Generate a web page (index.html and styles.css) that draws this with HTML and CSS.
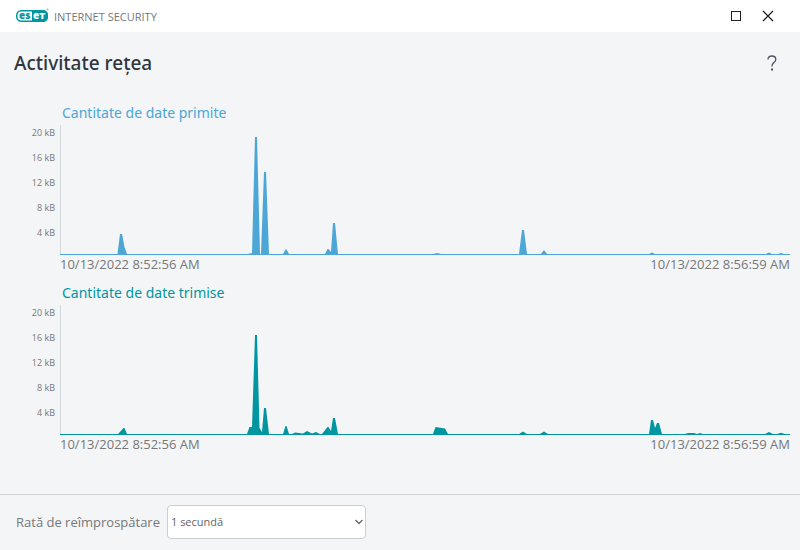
FILE: index.html
```html
<!DOCTYPE html>
<html lang="ro">
<head>
    <meta charset="UTF-8">
    <meta name="viewport" content="width=device-width, initial-scale=1.0">
    <title>Activitate reţea</title>
    <link rel="stylesheet" href="styles.css">
</head>
<body>

<header class="titlebar">
    <svg class="logo" width="33" height="16" viewBox="0 0 33 16" role="img" aria-label="ESET">
        <rect x="0.75" y="2.75" width="30.500" height="10.500" rx="4.500" fill="#fff" stroke="#0096a1" stroke-width="1.500"/>
        <path d="M16 2h11a5 5 0 0 1 5 5v2a5 5 0 0 1-5 5H16z" fill="#0096a1"/>
        <circle cx="31.5" cy="1.5" r="1" fill="#7cc8cd"/>
        <text class="logo-text" x="3" y="11" fill="#0096a1">es</text>
        <text class="logo-text" x="17" y="11" fill="#fff">eт</text>
    </svg>
    <span class="product">INTERNET SECURITY</span>
    <button type="button" class="window-button" aria-label="Maximizare">
        <svg width="12" height="12" viewBox="0 0 12 12"><rect x="1.5" y="1.5" width="9" height="9" fill="none" stroke="#222"/></svg>
    </button>
    <button type="button" class="window-button" aria-label="Închidere">
        <svg width="12" height="12" viewBox="0 0 12 12"><path d="M1 1l10 10M11 1L1 11" fill="none" stroke="#222" stroke-width="1.3"/></svg>
    </button>
</header>

<main class="content">
    <div class="heading">
        <h1>Activitate reţea</h1>
        <button type="button" class="help-button" aria-label="Ajutor">
            <svg width="10" height="16" viewBox="0 0 10 16">
                <path d="M1 4.500C1 2 2.600 1 4.800 1S8.800 2.300 8.800 4.500C8.800 7.500 5 7.500 5 10.800V11.500" fill="none" stroke="#4c5560" stroke-width="1.300"/>
                <rect x="4" y="13.500" width="2" height="2" fill="#4c5560"/>
            </svg>
        </button>
    </div>

    <section class="chart received">
        <h2>Cantitate de date primite</h2>
        <div class="scale">
            <span>20 kB</span>
            <span>16 kB</span>
            <span>12 kB</span>
            <span>8 kB</span>
            <span>4 kB</span>
        </div>
        <svg class="plot" viewBox="60 0 730 130" preserveAspectRatio="none">
            <path d="M60 129H117.500L120 109H122L124.500 122L127 129H247L250 128.500L252 128L255 12H257L260 129H261L264 47H266L269 129H283L285.500 124.500H286.500L289 129H325L327.500 124H328.500L331 127L333 98H335L338 129H433L437 128L441 129H519L522 105H524L527 129H541L544 125L547 129H649L652 127.500L655 129H766L769 127.500L772 129H778L781 128L784 129H790V130H60Z"/>
        </svg>
        <div class="times">
            <span>10/13/2022 8:52:56 AM</span>
            <span>10/13/2022 8:56:59 AM</span>
        </div>
    </section>

    <section class="chart sent">
        <h2>Cantitate de date trimise</h2>
        <div class="scale">
            <span>20 kB</span>
            <span>16 kB</span>
            <span>12 kB</span>
            <span>8 kB</span>
            <span>4 kB</span>
        </div>
        <svg class="plot" viewBox="60 0 730 130" preserveAspectRatio="none">
            <path d="M60 129H118L123.500 123H124.500L127 129H247L249.500 122H252L255 30H257L259.500 123L262 127L264 103H266L269 129H283L285.500 121H286.500L289 129H292L295 127.500L303 128.500L307 126L312 128.500L316 127L320 129H322L327.500 122H328.500L331 126L333 113H335L338 129H433L435.500 122L445 123.500L448 129H519L523 126.500L527 129H540L544 126.500L548 129H649L651 115H653L655 123L657 118H659L662 129H685L688 128H694L697 129L700 128L703 129H765L769 127L773 129H777L781 127.800L785 129H790V130H60Z"/>
        </svg>
        <div class="times">
            <span>10/13/2022 8:52:56 AM</span>
            <span>10/13/2022 8:56:59 AM</span>
        </div>
    </section>
</main>

<footer class="footer">
    <label for="refreshRate">Rată de reîmprospătare</label>
    <div class="select-box">
        <select id="refreshRate" name="refreshRate">
            <option>1 secundă</option>
        </select>
        <svg class="arrow" width="8" height="6" viewBox="0 0 8 6"><path d="M0.500 1L4 4.500L7.500 1" fill="none" stroke="#666" stroke-width="1.300"/></svg>
    </div>
</footer>

</body>
</html>
```
FILE: styles.css
```css
* {
    box-sizing: border-box;
}

body {
    display: flex;
    flex-direction: column;
    min-height: 100vh;
    margin: 0;
    background-color: #f3f5f7;
    color: #777;
    font-family: "Open Sans", "Segoe UI", sans-serif;
    font-size: 13px;
}

button {
    display: flex;
    align-items: center;
    justify-content: center;
    padding: 0;
    border: none;
    background: none;
    cursor: pointer;
}

.titlebar {
    display: flex;
    align-items: center;
    height: 32px;
    padding: 0 16px;
    background-color: #fff;
}

.logo-text {
    font-family: "Open Sans", sans-serif;
    font-size: 10px;
    font-weight: 800;
}

.product {
    flex: 1;
    margin-left: 5px;
    color: #73787c;
    font-size: 11px;
}

.window-button {
    width: 32px;
    height: 32px;
}

.heading {
    display: flex;
    align-items: center;
    justify-content: space-between;
    height: 62px;
    margin-bottom: 8px;
    padding: 0 16px 0 14px;
}

h1 {
    margin: 0;
    color: #2f3640;
    font-family: "Noto Sans", sans-serif;
    font-size: 19px;
    font-weight: 500;
}

.help-button {
    width: 24px;
    height: 24px;
}

.content {
    flex: 1;
}

.chart {
    display: grid;
    grid-template-columns: 60px 1fr;
    grid-template-rows: 23px 130px 20px;
    margin: 0 10px 7px 0;
}

h2 {
    grid-column: 2;
    margin: 0 0 0 2px;
    font-family: "Noto Sans", sans-serif;
    font-size: 14px;
    font-weight: 400;
    line-height: 22px;
}

.scale {
    display: flex;
    flex-direction: column;
    gap: 10px;
    padding-right: 5px;
    border-right: 1px solid #d3d6d8;
    margin-right: -1px;
    font-size: 9px;
    line-height: 15px;
    text-align: right;
}

.plot {
    display: block;
    width: 100%;
    height: 130px;
}

.times {
    display: flex;
    grid-column: 2;
    justify-content: space-between;
    line-height: 18px;
}

.received h2 {
    color: #4ca6d6;
}

.received .plot {
    fill: #4ca6d6;
}

.sent h2 {
    color: #0096a1;
}

.sent .plot {
    fill: #0096a1;
}

.footer {
    display: flex;
    align-items: center;
    gap: 7px;
    height: 56px;
    padding: 0 16px 2px;
    border-top: 1px solid #d0d3d6;
}

.select-box {
    position: relative;
    width: 199px;
}

select {
    display: block;
    width: 100%;
    height: 34px;
    padding: 0 20px 0 3px;
    border: 1px solid #ccced0;
    border-radius: 4px;
    appearance: none;
    background-color: #fff;
    color: #666;
    font-family: inherit;
    font-size: 11px;
}

.arrow {
    position: absolute;
    top: 14px;
    right: 3px;
    pointer-events: none;
}
```
